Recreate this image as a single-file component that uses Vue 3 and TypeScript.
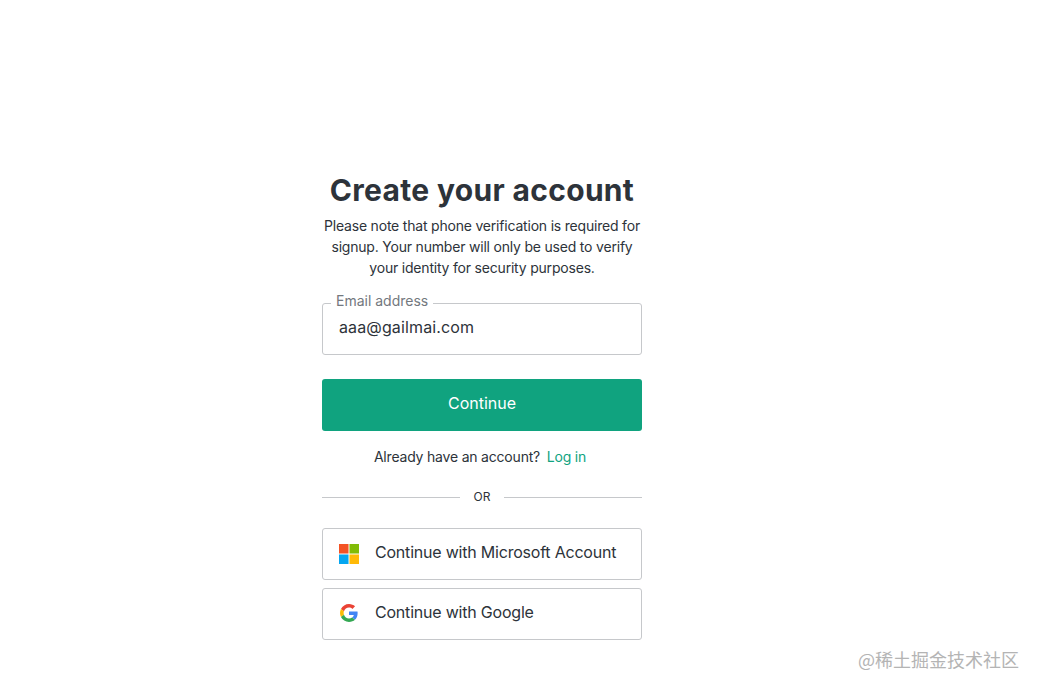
<script setup lang="ts">
const note = 'Please note that phone verification is required for signup. Your number will only be used to verify your identity for security purposes.'
</script>

<template>
  <main class="page">
    <section class="card">
      <h1 class="title">Create your account</h1>
      <p class="note">{{ note }}</p>
      <div class="field">
        <span class="label">Email address</span>
        <span class="value">aaa@gailmai.com</span>
      </div>
      <button class="continue" type="button">Continue</button>
      <p class="login">Already have an account? <a class="link">Log in</a></p>
      <div class="divider"><span class="or">OR</span></div>
      <button class="social" type="button">
        <svg class="icon microsoft" viewBox="0 0 21 21" width="20" height="20" aria-hidden="true">
          <rect x="0" y="0" width="10" height="10" fill="#f35325" />
          <rect x="11" y="0" width="10" height="10" fill="#81bc06" />
          <rect x="0" y="11" width="10" height="10" fill="#05a6f0" />
          <rect x="11" y="11" width="10" height="10" fill="#ffba08" />
        </svg>
        <span class="social-text">Continue with Microsoft Account</span>
      </button>
      <button class="social second" type="button">
        <svg class="icon google" viewBox="0 0 48 48" width="18" height="18" aria-hidden="true">
          <path fill="#EA4335" d="M24 9.5c3.5 0 6.7 1.2 9.2 3.6l6.9-6.9C35.9 2.4 30.5 0 24 0 14.6 0 6.5 5.4 2.6 13.2l8 6.2C12.5 13.7 17.8 9.5 24 9.5z" />
          <path fill="#4285F4" d="M47 24.5c0-1.6-.1-3.1-.4-4.5H24v9h12.9c-.6 3-2.2 5.5-4.7 7.2l7.7 6c4.5-4.2 7.1-10.3 7.1-17.7z" />
          <path fill="#FBBC05" d="M10.5 28.6c-.5-1.400-.8-3-.8-4.600s.3-3.200.8-4.600l-8-6.200C.9 16.500 0 20.100 0 24s.9 7.500 2.600 10.800l7.900-6.200z" />
          <path fill="#34A853" d="M24 48c6.500 0 11.900-2.100 15.900-5.800l-7.700-6c-2.200 1.500-4.900 2.300-8.200 2.300-6.200 0-11.500-4.200-13.400-9.900l-8 6.200C6.500 42.600 14.600 48 24 48z" />
        </svg>
        <span class="social-text">Continue with Google</span>
      </button>
    </section>
    <div class="watermark">@稀土掘金技术社区</div>
  </main>
</template>

<style>
html, body { margin: 0; background: #fff; }
</style>

<style scoped>
.page {
  position: relative;
  box-sizing: border-box;
  height: 690px;
  overflow: hidden;
  padding: 172px 0 0 322px;
  font-family: Inter, "Noto Sans", sans-serif;
  color: #2d333a;
}
.card { width: 320px; display: flex; flex-direction: column; }
.title {
  margin: 0;
  font-size: 30px;
  line-height: 37px;
  font-weight: 700;
  letter-spacing: 0.32px;
  text-align: center;
  white-space: nowrap;
}
.note {
  margin: 6px 0 1px;
  font-size: 14px;
  line-height: 21px;
  letter-spacing: -0.2px;
  text-align: center;
}
.field {
  position: relative;
  box-sizing: border-box;
  height: 52px;
  margin-top: 24px;
  padding: 0 16px 4px;
  display: flex;
  align-items: center;
  border: 1px solid #c6c8cb;
  border-radius: 3px;
}
.label {
  position: absolute;
  left: 8px;
  top: -12px;
  padding: 0 5px;
  background: #fff;
  font-size: 14px;
  line-height: 18px;
  color: #73787e;
}
.value { font-size: 16px; letter-spacing: 0.13px; }
.continue {
  box-sizing: border-box;
  height: 52px;
  margin-top: 24px;
  padding: 0 0 4px;
  border: 0;
  border-radius: 3px;
  background: #10a37f;
  color: #fff;
  font: 400 16px Inter, "Noto Sans", sans-serif;
}
.login {
  margin: 16px 0 0;
  padding-right: 4px;
  font-size: 14px;
  line-height: 20px;
  letter-spacing: -0.2px;
  text-align: center;
  white-space: pre-wrap;
}
.link { color: #10a37f; margin-left: 3px; }
.divider {
  margin-top: 20px;
  display: flex;
  align-items: center;
  gap: 14px;
  height: 20px;
}
.divider::before, .divider::after {
  content: "";
  flex: 1;
  border-top: 1px solid #c6c8cb;
}
.or { font-size: 12px; line-height: 16px; }
.social {
  box-sizing: border-box;
  height: 52px;
  margin-top: 21px;
  padding: 0 16px 2px;
  display: flex;
  align-items: center;
  gap: 16px;
  background: #fff;
  border: 1px solid #c6c8cb;
  border-radius: 3px;
  color: #2d333a;
  font: 400 16px Inter, "Noto Sans", sans-serif;
}
.social-text { margin-bottom: 2px; letter-spacing: -0.21px; }
.second { margin-top: 8px; }
.icon { flex: none; }
.microsoft { margin-top: 2px; }
.google { margin: 0 1px; }
.watermark {
  position: absolute;
  right: 20px;
  top: 648px;
  font-family: "Noto Sans CJK SC", sans-serif;
  font-size: 18px;
  line-height: 22px;
  color: #b4b4b4;
  white-space: nowrap;
}
</style>
